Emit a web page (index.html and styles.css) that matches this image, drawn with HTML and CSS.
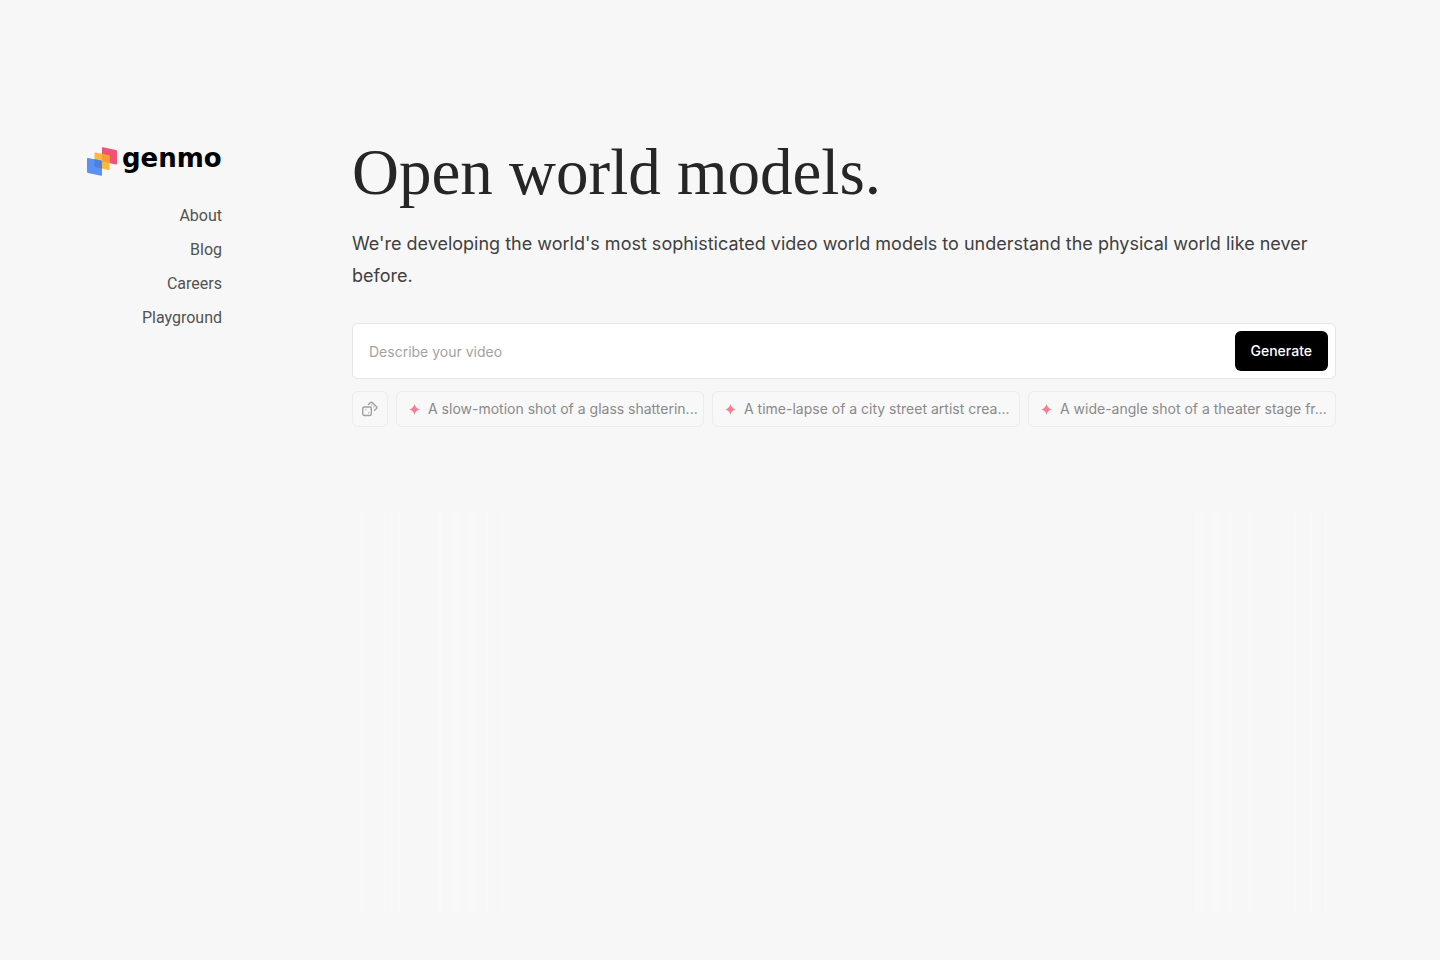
FILE: index.html
```
<!DOCTYPE html>
<html lang="en">
<head>
  <meta charset="UTF-8">
  <meta name="viewport" content="width=device-width, initial-scale=1.0">
  <title>Genmo</title>
  <link rel="stylesheet" href="styles.css">
</head>
<body>
  <div class="page">
    <aside class="sidebar">
      <a class="logo" href="#">
        <svg class="logo-mark" width="30" height="30" viewBox="0 0 30 30" aria-hidden="true">
          <path d="M16 .3 L29 3 Q30 3.200 30 4.200 V16.500 Q30 17.700 29 17.500 L15 14.500 V1.300 Q15 .1 16 .3Z" fill="#ee5475"/>
          <path d="M8.500 5.600 L21.500 8.300 Q22.500 8.500 22.500 9.500 V22 Q22.500 23.200 21.500 23 L7.500 20 V6.600 Q7.500 5.400 8.500 5.600Z" fill="#fdb93f"/>
          <path d="M15 7 L21.500 8.300 Q22.500 8.500 22.500 9.500 V16.100 L15 14.500Z" fill="#fb9c35"/>
          <path d="M1 11 L14 13.600 Q15 13.800 15 14.800 V27.500 Q15 28.900 14 28.700 L1 26 Q0 25.800 0 24.800 V12 Q0 10.800 1 11Z" fill="#5a91f2"/>
          <path d="M7.500 12.300 L14 13.600 Q15 13.800 15 14.800 V21.600 L7.500 20Z" fill="#4d82db"/>
        </svg>
        <span class="logo-text">genmo</span>
      </a>
      <nav class="nav">
        <ul>
          <li><a href="#">About</a></li>
          <li><a href="#">Blog</a></li>
          <li><a href="#">Careers</a></li>
          <li><a href="#">Playground</a></li>
        </ul>
      </nav>
    </aside>

    <main class="content">
      <h1 class="title">Open world models.</h1>
      <p class="intro">We're developing the world's most sophisticated video world models to understand the physical world like never before.</p>

      <form class="prompt">
        <input class="prompt-input" type="text" placeholder="Describe your video" aria-label="Describe your video">
        <button class="generate" type="submit">Generate</button>
      </form>

      <div class="suggestions">
        <button class="shuffle" type="button" aria-label="Shuffle prompts">
          <svg width="16" height="16" viewBox="0 0 16 16" fill="none" stroke="#a0a0a0" stroke-width="1.400" aria-hidden="true">
            <rect x=".8" y="6" width="8.500" height="8.500" rx="1.500"/>
            <path d="M6 3.700 L8.500 1.600 Q9.500 .8 10.400 1.700 L14.500 5.700 Q15.300 6.600 14.500 7.500 L12 9.800"/>
            <path d="M3.500 8.500h.8M6.300 11.700h.8M9.500 4h.8M11.500 6h.8"/>
          </svg>
        </button>
        <button class="chip" type="button">
          <svg class="spark" viewBox="0 0 12 12" aria-hidden="true"><path d="M6 .3 Q7.200 4.800 11.700 6 Q7.200 7.200 6 11.700 Q4.800 7.200 .3 6 Q4.800 4.800 6 .3Z"/></svg>
          <span>A slow-motion shot of a glass shatterin...</span>
        </button>
        <button class="chip" type="button">
          <svg class="spark" viewBox="0 0 12 12" aria-hidden="true"><path d="M6 .3 Q7.200 4.800 11.700 6 Q7.200 7.200 6 11.700 Q4.800 7.200 .3 6 Q4.800 4.800 6 .3Z"/></svg>
          <span>A time-lapse of a city street artist crea...</span>
        </button>
        <button class="chip" type="button">
          <svg class="spark" viewBox="0 0 12 12" aria-hidden="true"><path d="M6 .3 Q7.200 4.800 11.700 6 Q7.200 7.200 6 11.700 Q4.800 7.200 .3 6 Q4.800 4.800 6 .3Z"/></svg>
          <span>A wide-angle shot of a theater stage fr...</span>
        </button>
      </div>

      <div class="curtain">
        <div class="stripes stripes-left"></div>
        <div class="stripes stripes-right"></div>
      </div>
    </main>
  </div>
</body>
</html>
```
FILE: styles.css
```
* {
  box-sizing: border-box;
}

body {
  margin: 0;
  background: #f7f7f7;
  color: #262626;
  font-family: Inter, sans-serif;
}

.page {
  display: flex;
  gap: 130px;
  min-height: 100vh;
  padding: 136px 104px 48px 87px;
}

/* Sidebar */
.sidebar {
  flex: none;
  width: 135px;
  padding-top: 8px;
}

.logo {
  display: flex;
  align-items: center;
  gap: 5px;
  height: 36px;
  color: #000;
  text-decoration: none;
}

.logo-mark {
  flex: none;
}

.logo-text {
  font-family: "DejaVu Sans", sans-serif;
  font-size: 26px;
  font-weight: 700;
  line-height: 28px;
  padding-bottom: 8px;
}

.nav ul {
  list-style: none;
  margin: 24px 0 0;
  padding: 0;
  display: grid;
  gap: 10px;
  text-align: right;
}

.nav a {
  color: #525252;
  font-family: Roboto, sans-serif;
  font-size: 16px;
  line-height: 24px;
  text-decoration: none;
}

/* Main column */
.content {
  flex: 1;
  min-width: 0;
  display: flex;
  flex-direction: column;
}

.title {
  margin: 0;
  font-family: "Liberation Serif", serif;
  font-size: 65px;
  font-weight: 400;
  line-height: 72px;
}

.intro {
  margin: 20px 0 0;
  color: #404040;
  font-size: 18px;
  line-height: 32px;
}

.prompt {
  display: flex;
  height: 56px;
  margin-top: 31px;
  padding: 7px;
  background: #fff;
  border: 1px solid #e5e5e5;
  border-radius: 6px;
}

.prompt-input {
  flex: 1;
  min-width: 0;
  padding: 2px 9px 0;
  border: 0;
  outline: 0;
  background: none;
  font: 14px/20px Inter, sans-serif;
}

.prompt-input::placeholder {
  color: #a3a3a3;
}

.generate {
  padding: 0 16px;
  border: 0;
  border-radius: 6px;
  background: #000;
  color: #fff;
  font: 500 14px/20px Inter, sans-serif;
  cursor: pointer;
}

.suggestions {
  display: flex;
  gap: 8px;
  margin-top: 12px;
}

.shuffle,
.chip {
  display: flex;
  align-items: center;
  height: 36px;
  border: 1px solid #ececec;
  border-radius: 6px;
  background: #f8f8f8;
  cursor: pointer;
}

.shuffle {
  flex: none;
  justify-content: center;
  width: 36px;
  padding: 0;
}

.chip {
  flex: 1;
  min-width: 0;
  gap: 8px;
  padding: 0 4px 0 12px;
  color: #8a8a8a;
  font: 14px/20px Inter, sans-serif;
}

.chip span {
  overflow: hidden;
  text-overflow: ellipsis;
  white-space: nowrap;
}

.spark {
  flex: none;
  width: 11px;
  height: 11px;
  fill: #f28095;
}

/* Faint vertical folds below the prompt */
.curtain {
  flex: 1;
  display: flex;
  justify-content: space-between;
  margin-top: 84px;
}

.stripes {
  width: 150px;
}

.stripes-left {
  background: linear-gradient(90deg, transparent 8px, #f8f8f8 8px 12px, transparent 12px 32px, #f8f8f8 32px 34px, transparent 34px 39px, #f8f8f8 39px 42px, transparent 42px 46px, #f9f9f9 46px 48px, transparent 48px 85px, #f9f9f9 85px 91px, transparent 91px 101px, #f8f8f8 101px 107px, transparent 107px 117px, #f8f8f8 117px 123px, transparent 123px 133px, #f9f9f9 133px 136px, transparent 136px 142px, #f6f6f6 142px 147px, transparent 147px);
}

.stripes-right {
  background: linear-gradient(90deg, transparent 5px, #f6f6f6 5px 9px, #f8f8f8 9px 17px, transparent 17px 27px, #f8f8f8 27px 33px, transparent 33px 43px, #f8f8f8 43px 45px, transparent 45px 61px, #f8f8f8 61px 65px, transparent 65px 108px, #f8f8f8 108px 110px, transparent 110px 124px, #f8f8f8 124px 126px, transparent 126px 138px, #f8f8f8 138px 141px, transparent 141px);
}
```
